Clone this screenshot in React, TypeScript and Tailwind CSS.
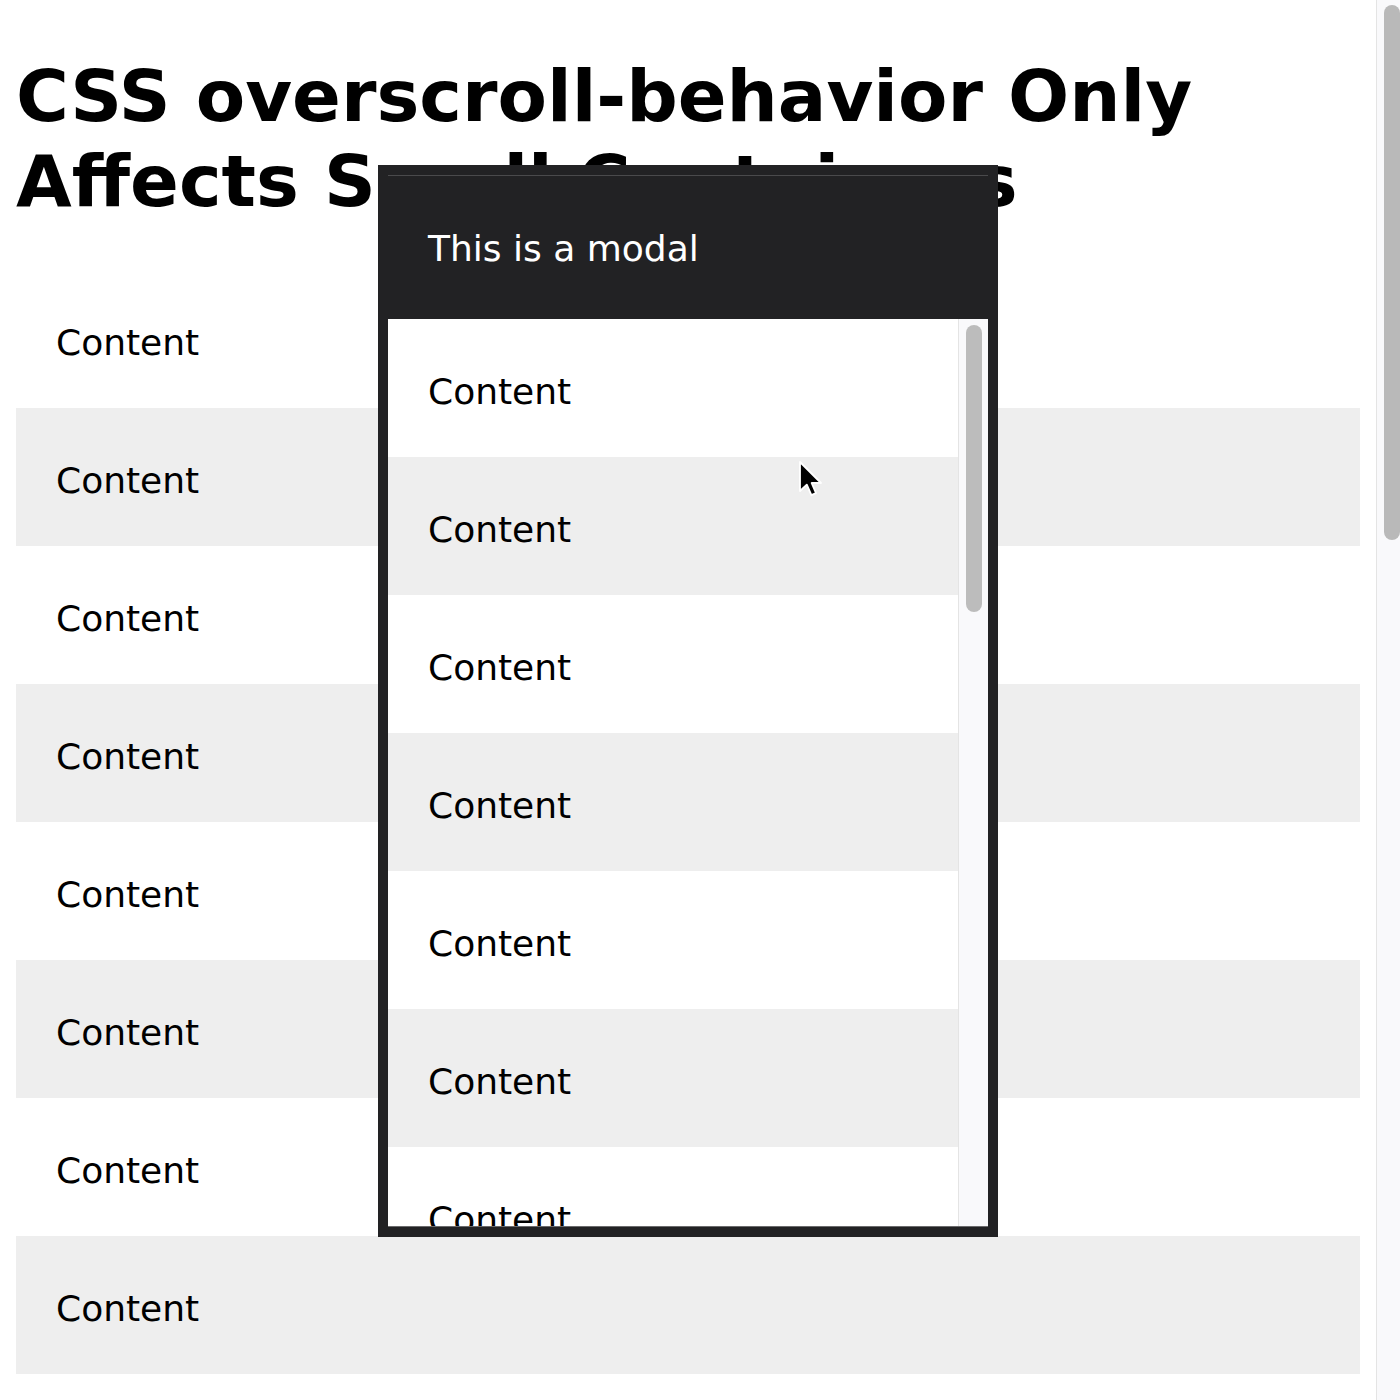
import React from 'react'

const pageRows = Array.from({ length: 8 }, (_, i) => i)
const modalRows = Array.from({ length: 7 }, (_, i) => i)

// pointer drawn over the modal list
function Cursor() {
  return (
    <svg
      className="absolute left-[798px] top-[460px]"
      width="26"
      height="40"
      viewBox="0 0 13 20"
    >
      <path
        d="M1 1 L1 15.5 L4.4 12.3 L6.7 17.6 L9 16.6 L6.8 11.5 L11.5 11.5 Z"
        fill="#000"
        stroke="#fff"
        strokeWidth="0.9"
        strokeLinejoin="round"
      />
    </svg>
  )
}

export default function App() {
  return (
    <div className="relative flex h-[1400px] overflow-hidden bg-white font-['DejaVu_Sans',Verdana,sans-serif] text-black">
      <main className="flex-1 px-4">
        <h1 className="mt-[54px] mb-[46px] text-[72px] leading-[85px] font-bold">
          CSS overscroll-behavior Only Affects Scroll Containers
        </h1>
        {pageRows.map((i) => (
          <div
            key={i}
            className={`px-10 pt-[52px] pb-[44px] text-[36px] leading-[42px] ${i % 2 === 1 ? 'bg-[#eeeeee]' : 'bg-white'}`}
          >
            Content
          </div>
        ))}
      </main>

      {/* page scrollbar */}
      <div className="w-6 shrink-0 border-l border-[#e4e4e4] bg-[#f9f9fb] pt-[5px] pl-[7px]">
        <div className="h-[535px] w-[16px] rounded-full bg-[#b9b9b9]" />
      </div>

      {/* modal */}
      <div className="absolute left-[378px] top-[165px] flex h-[1072px] w-[620px] flex-col border-[10px] border-[#222224] bg-[#222224]">
        <div className="h-[144px] shrink-0 border-t border-[#4a4a4c] px-10 pt-[52px] text-[36px] leading-[42px] text-white">
          This is a modal
        </div>
        <div className="flex min-h-0 flex-1 border-b border-[#6a6a6c] bg-white">
          <div className="flex-1 overflow-hidden">
            {modalRows.map((i) => (
              <div
                key={i}
                className={`px-10 pt-[52px] pb-[44px] text-[36px] leading-[42px] ${i % 2 === 1 ? 'bg-[#eeeeee]' : 'bg-white'}`}
              >
                Content
              </div>
            ))}
          </div>
          <div className="w-[30px] shrink-0 border-l border-[#e4e4e4] bg-[#f9f9fb] pt-[6px] pl-[7px]">
            <div className="h-[287px] w-[16px] rounded-full bg-[#bcbcbc]" />
          </div>
        </div>
      </div>

      <Cursor />
    </div>
  )
}
